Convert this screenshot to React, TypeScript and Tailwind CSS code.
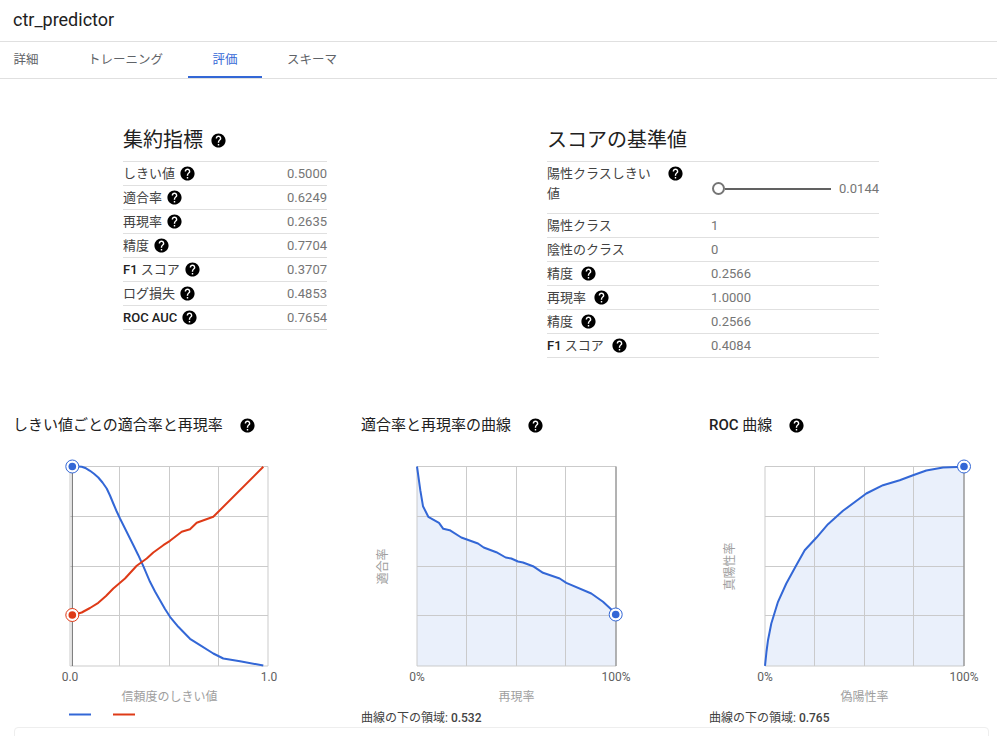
import { MdHelp } from "react-icons/md";

const font = "font-['Roboto','Noto_Sans_CJK_JP',sans-serif]";

const summaryRows = [
  { label: "しきい値", value: "0.5000" },
  { label: "適合率", value: "0.6249" },
  { label: "再現率", value: "0.2635" },
  { label: "精度", value: "0.7704" },
  { label: "F1", rest: " スコア", value: "0.3707" },
  { label: "ログ損失", value: "0.4853" },
  { label: "ROC AUC", bold: true, value: "0.7654" },
];

const scoreRows = [
  { label: "陽性クラス", value: "1", noHelp: true },
  { label: "陰性のクラス", value: "0", noHelp: true },
  { label: "精度", value: "0.2566" },
  { label: "再現率", value: "1.0000" },
  { label: "精度", value: "0.2566" },
  { label: "F1", rest: " スコア", value: "0.4084" },
];

const BLUE = "#3367d6";
const RED = "#de3a17";

const blueLine =
  "2.3,0 8,0 11.7,0.3 16,1.8 20,4.3 24,7.3 28.3,11 32.5,16 36.7,22 40,29 43.3,37 46.5,44.5 50,52 55,62 60,72 64,80 68.3,88.7 73.3,99.7 80,115.3 85,125 90,133.7 95,142.5 100,150.3 108.3,160.3 120,172.3 130,178.7 143.3,187 153.3,192 170,194.7 193.3,199";
const redLine =
  "2.3,148.7 11.7,146 20,141.5 28.3,136.3 36,129.5 43.3,122 55,112 66.7,99.3 76.7,92 83.3,86 93.3,78.7 100,74.3 111.7,65.3 120,62.7 126.7,56.3 143.3,50.3 193.3,0.3";
const prLine =
  "0,0 3.3,23.7 6,39.7 11.3,50.3 22,56.3 26.3,62.3 32.7,63.7 44.3,71 61,77 66.7,81 79.3,85.7 88.7,91 94.3,92 101,95 106,96 116,99.7 126,106.3 142.7,112 149.3,116.3 174.3,127 186,135.3 198.7,147";
const rocLine =
  "0,199.3 1.5,185 3,173.7 6.3,157 13,135.3 21.3,117 31.3,98.7 39.7,83.7 51.3,71.3 63,57.7 78,44.3 101.3,27 118,18.7 134.7,13.7 148,8.7 161.3,4 178,1 199.3,0.3";

function Help({ className = "" }: { className?: string }) {
  return <MdHelp className={`shrink-0 text-[17px] text-black ${className}`} />;
}

function Marker({ x, y, color }: { x: number; y: number; color: string }) {
  return (
    <g>
      <circle cx={x} cy={y} r="6.5" fill="white" stroke={color} strokeWidth="1" />
      <circle cx={x} cy={y} r="3.8" fill={color} />
    </g>
  );
}

function Curve({ points, color }: { points: string; color: string }) {
  return <polyline points={points} fill="none" stroke={color} strokeWidth="2" strokeLinejoin="round" />;
}

function Grid({ w }: { w: number }) {
  const xs = [0, 49.5, 99.5, 148.5, w];
  const ys = [0, 50, 100, 149, 199.5];
  return (
    <g stroke="#c9c9c9" strokeWidth="1" opacity="0.95">
      {xs.map((x) => (
        <line key={x} x1={x} x2={x} y1="0" y2="199.5" />
      ))}
      {ys.map((y) => (
        <line key={y} x1="0" x2={w} y1={y} y2={y} />
      ))}
    </g>
  );
}

function Plot({
  plotX,
  children,
  xLabels,
  xTitle,
  yTitle,
  titleX,
}: {
  plotX: number;
  children: React.ReactNode;
  xLabels: [string, string];
  xTitle: string;
  yTitle?: string;
  titleX: number;
}) {
  return (
    <svg width="330" height="262" className="mt-[24px] block overflow-visible">
      <g transform={`translate(${plotX} 7.5)`}>
        {children}
        <text x="0" y="214.5" textAnchor="middle" fontSize="12" fill="#616161">
          {xLabels[0]}
        </text>
        <text x="199" y="214.5" textAnchor="middle" fontSize="12" fill="#616161">
          {xLabels[1]}
        </text>
        <text x="99.5" y="234" textAnchor="middle" fontSize="12" fill="#9e9e9e">
          {xTitle}
        </text>
        {yTitle && (
          <text
            transform={`translate(${titleX} 100) rotate(-90)`}
            textAnchor="middle"
            fontSize="12"
            fill="#9e9e9e"
          >
            {yTitle}
          </text>
        )}
      </g>
    </svg>
  );
}

function ChartTitle({ title, className = "" }: { title: React.ReactNode; className?: string }) {
  return (
    <div className={`flex h-[20px] items-center gap-[16px] text-[15px] text-[#212121] ${className}`}>
      <span>{title}</span>
      <Help />
    </div>
  );
}

function Auc({ value }: { value: string }) {
  return (
    <p className="mt-[-11px] text-[12px] leading-[16px] text-[#424242]">
      曲線の下の領域: <span className="font-medium">{value}</span>
    </p>
  );
}

export default function App() {
  return (
    <div className={`${font} h-[736px] w-[997px] overflow-hidden bg-white`}>
      {/* header */}
      <div className="flex h-[42px] items-center border-b border-[#e0e0e0] pb-[2px] pl-[13px] text-[18px] text-[#212121]">
        ctr_predictor
      </div>

      {/* tabs */}
      <div className="flex h-[37px] border-b border-[#e0e0e0] text-[12.5px] text-[#5f6368]">
        <div className="-ml-[11px] flex w-[74px] items-center justify-center">詳細</div>
        <div className="flex items-center px-[25px]">トレーニング</div>
        <div className="flex w-[74px] items-center justify-center border-b-2 border-[#3367d6] pt-[2px] text-[#3367d6]">
          評価
        </div>
        <div className="flex items-center px-[25px]">スキーマ</div>
      </div>

      {/* summary and score tables */}
      <div className="flex pl-[123px]">
        <section className="w-[204px]">
          <div className="flex h-[82px] items-end gap-[7px] pb-[9px] text-[20px] leading-[24px] text-[#212121]">
            集約指標
            <Help className="mb-[3px]" />
          </div>
          <div className="border-t border-[#e0e0e0]">
            {summaryRows.map((r) => (
              <div
                key={r.label}
                className="flex h-[24px] items-center justify-between border-b border-[#e0e0e0] text-[13px] text-[#424242]"
              >
                <span className="flex items-center gap-[4px]">
                  <span>
                    <span className={r.bold || r.rest ? "font-medium text-[#212121]" : ""}>{r.label}</span>
                    {r.rest}
                  </span>
                  <Help />
                </span>
                <span className="text-[#757575]">{r.value}</span>
              </div>
            ))}
          </div>
        </section>

        <section className="ml-[220px] w-[332px]">
          <div className="flex h-[82px] items-end pb-[9px] text-[20px] leading-[24px] text-[#212121]">
            スコアの基準値
          </div>
          <div className="border-t border-[#e0e0e0]">
            <div className="flex h-[52px] items-start border-b border-[#e0e0e0] text-[13px] text-[#424242]">
              <div className="flex w-[164px] items-start pt-[2px]">
                <span className="w-[111px] leading-[20px]">陽性クラスしきい値</span>
                <Help className="ml-[9px] mt-[1px]" />
              </div>
              <div className="flex flex-1 items-center pt-[17px]">
                <span className="ml-[1px] h-[13px] w-[13px] shrink-0 rounded-full border-2 border-[#757575]" />
                <span className="h-[2px] w-[106px] bg-[#616161]" />
                <span className="ml-auto text-[#757575]">0.0144</span>
              </div>
            </div>
            {scoreRows.map((r, i) => (
              <div
                key={i}
                className="flex h-[24px] items-center border-b border-[#e0e0e0] text-[13px] text-[#424242]"
              >
                <span className="flex w-[164px] items-center gap-[7px]">
                  <span>
                    <span className={r.rest ? "font-medium text-[#212121]" : ""}>{r.label}</span>
                    {r.rest}
                  </span>
                  {!r.noHelp && <Help />}
                </span>
                <span className="text-[#757575]">{r.value}</span>
              </div>
            ))}
          </div>
        </section>
      </div>

      {/* charts */}
      <div className="mt-[57px] flex pl-[14px]">
        <div className="w-[347px]">
          <ChartTitle title="しきい値ごとの適合率と再現率" className="-ml-[1px]" />
          <Plot plotX={56} xLabels={["0.0", "1.0"]} xTitle="信頼度のしきい値" titleX={0}>
            <Grid w={198} />
            <line x1="2.3" x2="2.3" y1="0" y2="199.5" stroke="#616161" strokeWidth="1" />
            <Curve points={blueLine} color={BLUE} />
            <Curve points={redLine} color={RED} />
            <Marker x={2.3} y={0} color={BLUE} />
            <Marker x={2.3} y={148.5} color={RED} />
            <line x1="-1" x2="21" y1="248" y2="248" stroke={BLUE} strokeWidth="2" />
            <line x1="43" x2="65" y1="248" y2="248" stroke={RED} strokeWidth="2" />
          </Plot>
        </div>

        <div className="w-[348px]">
          <ChartTitle title="適合率と再現率の曲線" />
          <Plot plotX={56} xLabels={["0%", "100%"]} xTitle="再現率" yTitle="適合率" titleX={-30}>
            <polygon points={`0,199.5 ${prLine} 199,147 199,199.5`} fill={BLUE} opacity="0.1" />
            <Grid w={199} />
            <line x1="199" x2="199" y1="0" y2="199.5" stroke="#808080" strokeWidth="1" />
            <Curve points={prLine} color={BLUE} />
            <Marker x={198.7} y={148} color={BLUE} />
          </Plot>
          <Auc value="0.532" />
        </div>

        <div className="w-[270px]">
          <ChartTitle
            title={
              <>
                <span className="font-medium">ROC</span> 曲線
              </>
            }
          />
          <Plot plotX={56} xLabels={["0%", "100%"]} xTitle="偽陽性率" yTitle="真陽性率" titleX={-31}>
            <polygon points={`${rocLine} 199,199.5`} fill={BLUE} opacity="0.1" />
            <Grid w={199} />
            <line x1="199" x2="199" y1="0" y2="199.5" stroke="#808080" strokeWidth="1" />
            <Curve points={rocLine} color={BLUE} />
            <Marker x={199} y={0} color={BLUE} />
          </Plot>
          <Auc value="0.765" />
        </div>
      </div>

      {/* next card, cut off by the fold */}
      <div className="ml-[14px] mt-[1px] h-[40px] w-[975px] rounded-t-[4px] border border-[#eeeeee]" />
    </div>
  );
}
